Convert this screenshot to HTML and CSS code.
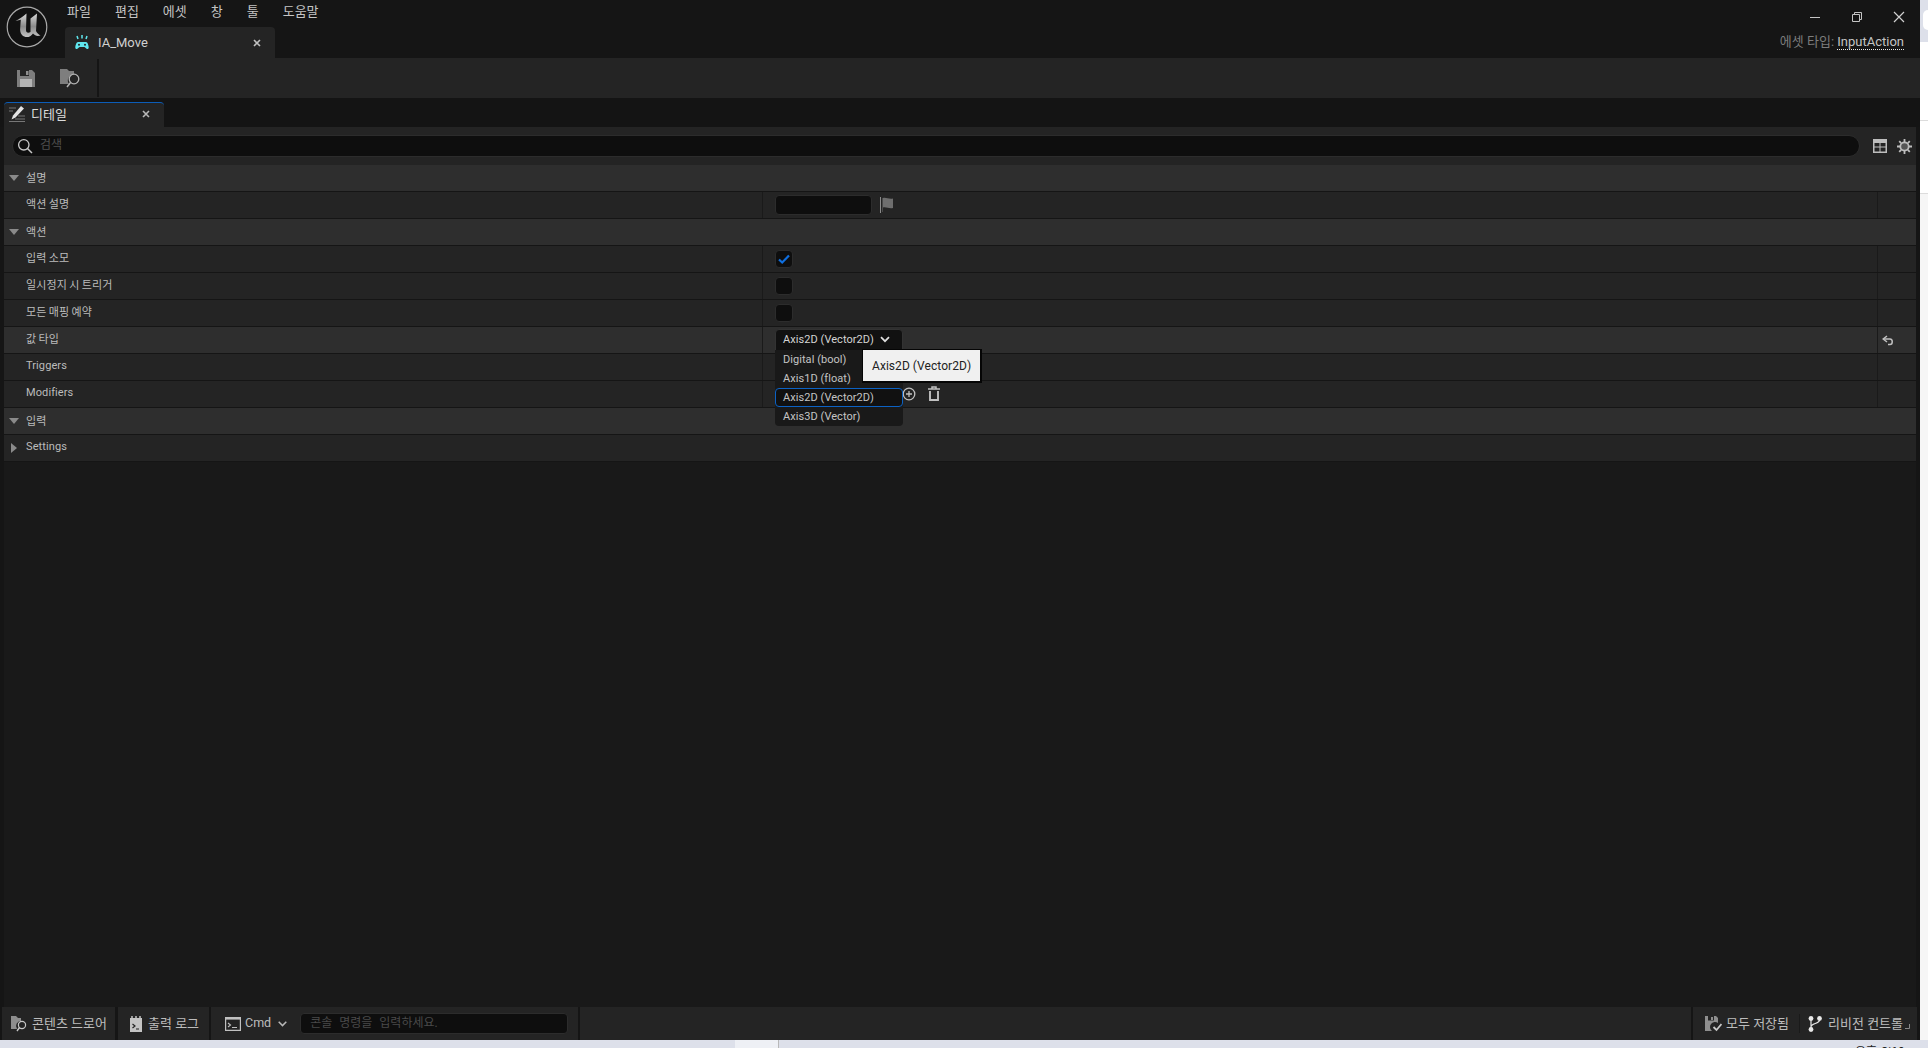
FILE: index.html
```html
<!DOCTYPE html>
<html lang="ko">
<head>
<meta charset="utf-8">
<title>IA_Move</title>
<link rel="stylesheet" href="styles.css">
</head>
<body>
<div class="screen">
  <div class="window">
    <header class="titlebar">
      <div class="logo">
        <svg width="44" height="44" viewBox="5 5 44 44">
          <defs><linearGradient id="ug" x1="0" y1="0" x2="0" y2="1"><stop offset="0" stop-color="#d8d8d8"/><stop offset=".55" stop-color="#8a8a8a"/><stop offset="1" stop-color="#c4c4c4"/></linearGradient></defs>
          <circle cx="27" cy="27" r="19.800" fill="#111" stroke="#a8a8a8" stroke-width="1.200"/>
          <path fill="url(#ug)" d="M15.500 21C19 19 23 17 26.500 13.500L26 30C26 32.500 28 33.500 30.500 32L30.500 18.500L37 13.500L36 31C37 33 39 34.500 40.500 35.500C37 36.500 35 35.500 33 33.500C30 38 25 38 22 35C20 32.500 20 30 20.200 28L20.800 19.800Z"/>
        </svg>
      </div>
      <div class="title-main">
        <nav class="menubar">
          <span class="menu-item">파일</span><span class="menu-item">편집</span><span class="menu-item">에셋</span><span class="menu-item">창</span><span class="menu-item">툴</span><span class="menu-item">도움말</span>
        </nav>
        <div class="doc-tab">
          <svg class="doc-tab-icon" width="14" height="15" viewBox="0 0 14 15">
            <path fill="#5fe6ee" d="M3 7h8c1.500 0 2.500 3 2.700 5.500.1 1.500-1.500 2-2.400 1L9.500 12h-5l-1.800 1.500c-.9 1-2.500.5-2.400-1C.5 10 1.500 7 3 7z"/>
            <path stroke="#5fe6ee" stroke-width="1.500" d="M2 1l1 3M7 0v3.500M12 1l-1 3"/>
            <circle cx="4" cy="9.800" r="1" fill="#222"/><circle cx="10" cy="9.800" r="1" fill="#222"/>
          </svg>
          <span class="doc-tab-name">IA_Move</span>
          <svg class="tab-close" width="8" height="8" viewBox="0 0 8 8"><path d="M1 1l6 6M7 1l-6 6" stroke="#c0c0c0" stroke-width="1.600"/></svg>
        </div>
      </div>
      <div class="title-right">
        <div class="win-controls">
          <svg width="12" height="12" viewBox="0 0 12 12"><path d="M1 6.500h10" stroke="#c4c4c4" stroke-width="1"/></svg>
          <svg width="12" height="12" viewBox="0 0 12 12"><path d="M1.500 3.500h7v7h-7zM3.500 3.500v-2h7v7h-2" fill="none" stroke="#c4c4c4" stroke-width="1"/></svg>
          <svg width="12" height="12" viewBox="0 0 12 12"><path d="M1 1l10 10M11 1L1 11" stroke="#d0d0d0" stroke-width="1.200"/></svg>
        </div>
        <div class="asset-type"><span class="asset-key">에셋 타입:</span> <span class="asset-val">InputAction</span></div>
      </div>
    </header>

    <div class="toolbar">
      <svg class="tool-save" width="18" height="18" viewBox="0 0 18 18"><path fill="#7e7e7e" d="M0 1h15l3 3v14H0z"/><path fill="#242424" d="M3 1h9v6H3z"/><path fill="#8e8e8e" d="M9 2h2.500v4H9z"/><path fill="#b4b4b4" d="M3 10h12v8H3z"/></svg>
      <svg class="tool-browse" width="21" height="21" viewBox="0 0 21 21"><path fill="#7e7e7e" d="M0 1h7l2 2h5v3.500a6 6 0 0 0-5 9.500H0z"/><circle cx="14" cy="11" r="4.800" fill="none" stroke="#b4b4b4" stroke-width="1.300"/><path d="M10.500 14.500L7 19" stroke="#b4b4b4" stroke-width="1.500"/></svg>
      <div class="tool-sep"></div>
    </div>

    <div class="panel-tabs">
      <div class="panel-tab">
        <svg width="16" height="16" viewBox="0 0 16 16"><path d="M0 2h7M0 5h4M6 13h10M9 10h7M0 15.500h16" stroke="#777" stroke-width="1"/><path fill="#e4e4e4" d="M12 0l3 2.500-8.500 9-4 2 1.500-4z"/></svg>
        <span class="panel-tab-name">디테일</span>
        <svg class="tab-close" width="8" height="8" viewBox="0 0 8 8"><path d="M1 1l6 6M7 1l-6 6" stroke="#b8b8b8" stroke-width="1.600"/></svg>
      </div>
    </div>

    <main class="panel">
      <div class="search-row">
        <div class="search-box">
          <svg width="16" height="16" viewBox="0 0 16 16"><circle cx="6.800" cy="6.800" r="5.200" fill="none" stroke="#c8c8c8" stroke-width="1.300"/><path d="M10.500 10.500L15 15" stroke="#c8c8c8" stroke-width="1.500"/></svg>
          <span class="search-ph">검색</span>
        </div>
        <svg class="search-table" width="14" height="14" viewBox="0 0 14 14"><path fill="#bdbdbd" fill-rule="evenodd" d="M0 0h14v14H0zM1.500 4v3.500h5V4zM7.500 4v3.500h5V4zM1.500 8.500v4h5v-4zM7.500 8.500v4h5v-4z"/></svg>
        <svg class="search-gear" width="15" height="15" viewBox="0 0 15 15"><circle cx="7.500" cy="7.500" r="4.200" fill="#555" stroke="#bdbdbd" stroke-width="1.800"/><path d="M7.500 0v3M7.500 12v3M0 7.500h3M12 7.500h3M2.200 2.200l2 2M10.800 10.800l2 2M12.800 2.200l-2 2M4.200 10.800l-2 2" stroke="#bdbdbd" stroke-width="1.800"/></svg>
      </div>

      <div class="row head"><span class="arrow-down"></span><span class="label-text">설명</span></div>
      <div class="row">
        <div class="cell-label"><span class="label-text">액션 설명</span></div>
        <div class="cell-value">
          <div class="textbox"></div>
          <svg class="flag" width="14" height="16" viewBox="0 0 14 16"><path d="M.5 0v16" stroke="#8a8a8a"/><path fill="#6e6e6e" d="M3 1c3-1 6 1.500 10 .5V11c-4 1-7-1.500-10-.5V15H2.500V1z"/></svg>
        </div>
        <div class="cell-reset"></div>
      </div>

      <div class="row head"><span class="arrow-down"></span><span class="label-text">액션</span></div>
      <div class="row">
        <div class="cell-label"><span class="label-text">입력 소모</span></div>
        <div class="cell-value"><div class="check"><svg width="14" height="14" viewBox="0 0 14 14"><path d="M2 7.500l3.200 3L12 3.500" fill="none" stroke="#0f6fe0" stroke-width="2.200"/></svg></div></div>
        <div class="cell-reset"></div>
      </div>
      <div class="row">
        <div class="cell-label"><span class="label-text">일시정지 시 트리거</span></div>
        <div class="cell-value"><div class="check"></div></div>
        <div class="cell-reset"></div>
      </div>
      <div class="row">
        <div class="cell-label"><span class="label-text">모든 매핑 예약</span></div>
        <div class="cell-value"><div class="check"></div></div>
        <div class="cell-reset"></div>
      </div>
      <div class="row hot">
        <div class="cell-label"><span class="label-text">값 타입</span></div>
        <div class="cell-value">
          <div class="combo">
            <span class="combo-text">Axis2D (Vector2D)</span>
            <svg width="10" height="7" viewBox="0 0 10 7"><path d="M1 1.200l4 4 4-4" fill="none" stroke="#e0e0e0" stroke-width="1.700"/></svg>
          </div>
          <div class="combo-menu">
            <div class="combo-item">Digital (bool)</div>
            <div class="combo-item">Axis1D (float)</div>
            <div class="combo-item selected">Axis2D (Vector2D)</div>
            <div class="combo-item">Axis3D (Vector)</div>
          </div>
          <div class="tooltip">Axis2D (Vector2D)</div>
        </div>
        <div class="cell-reset"><svg width="12" height="11" viewBox="0 0 12 11"><path d="M5 1L1.200 4 5 7" fill="none" stroke="#c0c0c0" stroke-width="1.500"/><path d="M1.500 4H8c3 0 3 5.500 0 5.500H6" fill="none" stroke="#c0c0c0" stroke-width="1.500"/></svg></div>
      </div>
      <div class="row">
        <div class="cell-label"><span class="label-text">Triggers</span></div>
        <div class="cell-value"></div>
        <div class="cell-reset"></div>
      </div>
      <div class="row">
        <div class="cell-label"><span class="label-text">Modifiers</span></div>
        <div class="cell-value array-tools">
          <svg width="14" height="14" viewBox="0 0 14 14"><circle cx="7" cy="7" r="5.800" fill="none" stroke="#c0c0c0" stroke-width="1.300"/><path d="M7 4v6M4 7h6" stroke="#c0c0c0" stroke-width="1.300"/></svg>
          <svg width="14" height="15" viewBox="0 0 14 15"><path d="M1 3h12M5 3V1h4v2" fill="none" stroke="#c0c0c0" stroke-width="1.500"/><path d="M3 5v9h8V5" fill="none" stroke="#c0c0c0" stroke-width="1.900"/></svg>
        </div>
        <div class="cell-reset"></div>
      </div>

      <div class="row head"><span class="arrow-down"></span><span class="label-text">입력</span></div>
      <div class="row plain">
        <span class="arrow-right"></span><span class="label-text">Settings</span>
      </div>
    </main>

    <footer class="statusbar">
      <div class="st-sec st-drawer">
        <svg width="17" height="16" viewBox="0 0 17 16"><path fill="#8e8e8e" d="M0 0h5l2 2h3v3a5 5 0 0 0-4 8H0z"/><circle cx="11" cy="9" r="3.600" fill="none" stroke="#c8c8c8" stroke-width="1.200"/><path d="M8.500 11.500L6 15" stroke="#c8c8c8" stroke-width="1.400"/></svg>
        <span class="st-text">콘텐츠 드로어</span>
      </div>
      <div class="st-sec st-log">
        <svg width="12" height="16" viewBox="0 0 12 16"><path fill="#c4c4c4" d="M0 2h12v14H0z"/><path d="M2 0v3M6 0v3M10 0v3" stroke="#c4c4c4" stroke-width="1.500"/><path d="M2.500 8l2.500 2-2.500 2M6 13h3" fill="none" stroke="#222" stroke-width="1.200"/></svg>
        <span class="st-text">출력 로그</span>
      </div>
      <div class="st-sec st-cmd">
        <svg width="16" height="14" viewBox="0 0 16 14"><path fill="none" stroke="#c0c0c0" stroke-width="1.200" d="M.6.6h14.800v12.800H.6z"/><path fill="#c0c0c0" d="M.6.6h14.800v2H.6z"/><path d="M3 6l2.500 2L3 10M7 10.500h5" fill="none" stroke="#c0c0c0" stroke-width="1.100"/></svg>
        <span class="cmd-name st-text">Cmd</span>
        <svg class="cmd-chev" width="9" height="6" viewBox="0 0 9 6"><path d="M.7.800l3.800 3.800L8.300.8" fill="none" stroke="#b8b8b8" stroke-width="1.500"/></svg>
        <div class="cmd-input">콘솔 명령을 입력하세요.</div>
      </div>
      <div class="st-fill"></div>
      <div class="st-sec st-right">
        <svg width="17" height="16" viewBox="0 0 17 16"><path fill="#8e8e8e" d="M0 0h11l2 2v5a5 5 0 0 0-6 8H0z"/><path fill="#242424" d="M3 0h6v4.500H3z"/><path fill="#8e8e8e" d="M6 1h2v3H6z"/><path d="M8.500 11l3 3L16.500 8" fill="none" stroke="#c8c8c8" stroke-width="1.800"/></svg>
        <span class="st-saved st-text">모두 저장됨</span>
        <div class="st-divider"></div>
        <svg width="14" height="16" viewBox="0 0 14 16"><circle cx="3" cy="2.500" r="2.400" fill="#e8e8e8"/><circle cx="3" cy="13.500" r="2.400" fill="#e8e8e8"/><circle cx="11.500" cy="2.500" r="2.400" fill="#e8e8e8"/><path d="M3 3v10M11.500 4c0 4-8.500 3-8.500 7" fill="none" stroke="#e8e8e8" stroke-width="1.200"/></svg>
        <span class="st-rev st-text">리비전 컨트롤</span>
        <svg class="st-grip" width="5" height="5" viewBox="0 0 5 5"><path d="M4.500 0v4.500H0" fill="none" stroke="#888"/></svg>
      </div>
    </footer>
  </div>
  <aside class="side-strip">
    <div class="strip-blue"><div class="strip-shape"></div></div>
    <div class="strip-white strip-a"></div>
    <div class="strip-white strip-b"></div>
    <div class="strip-white strip-c"></div>
  </aside>
</div>
<div class="taskbar">
  <div class="task-a"></div>
  <div class="task-b"></div>
  <div class="task-c"></div>
  <div class="task-clock">오후 3:10</div>
</div>
</body>
</html>
```
FILE: styles.css
```css
* { box-sizing: border-box; }
html, body { margin: 0; padding: 0; width: 1928px; height: 1048px; overflow: hidden; }
body { background: #dde0ea; font-family: Roboto, "Noto Sans CJK KR", sans-serif; font-size: 11px; color: #c0c0c0; }
svg { display: block; flex: none; }

.screen { display: flex; height: 1040px; }
.window { width: 1920px; height: 1040px; background: #151515; display: flex; flex-direction: column; }

/* title bar */
.titlebar { height: 58px; display: flex; flex: none; background: #151515; }
.logo { width: 65px; padding: 5px 0 0 5px; }
.title-main { flex: 1; display: flex; flex-direction: column; }
.menubar { height: 27px; display: flex; padding: 0 0 6px 2px; align-items: center; font-size: 13px; color: #c4c4c4; }
.menu-item { margin-right: 24px; }
.doc-tab { width: 210px; height: 31px; background: #242424; border-radius: 4px 4px 0 0; display: flex; align-items: center; padding: 0 14px 0 10px; }
.doc-tab-name { margin-left: 9px; font-size: 13px; color: #d0d0d0; flex: 1; }
.title-right { width: 240px; display: flex; flex-direction: column; align-items: flex-end; padding-right: 16px; }
.win-controls { display: flex; gap: 30px; height: 31px; align-items: center; padding-top: 3px; margin-right: -1px; }
.asset-type { font-size: 13px; line-height: 15px; margin-top: 3px; }
.asset-key { color: #7c7c7c; }
.asset-val { color: #c4c4c4; border-bottom: 1px dotted #e8e8e8; }

/* toolbar */
.toolbar { height: 40px; flex: none; background: #242424; display: flex; align-items: center; padding-left: 17px; }
.tool-browse { margin-left: 25px; }
.tool-sep { width: 2px; height: 38px; background: #151515; margin-left: 16px; }

/* panel tabs */
.panel-tabs { height: 29px; flex: none; background: #141414; padding: 4px 0 0 4px; }
.panel-tab { width: 160px; height: 25px; background: #242424; border-top: 1px solid #0c5db8; border-radius: 4px 4px 0 0; display: flex; align-items: center; padding: 0 14px 2px 5px; }
.panel-tab-name { margin: 0 0 2px 6px; font-size: 13px; color: #dcdcdc; flex: 1; }

/* details */
.panel { flex: 1; margin: 0 4px; background: #191919; min-height: 0; }
.search-row { height: 38px; background: #242424; display: flex; align-items: center; padding: 0 4px 0 8px; }
.search-box { width: 1848px; height: 22px; background: #0e0e0e; border: 1px solid #2c2c2c; border-radius: 11px; display: flex; align-items: center; padding-left: 4px; }
.search-ph { margin: 0 0 5px 7px; font-size: 12px; color: #4e4e4e; }
.search-table { margin-left: 13px; }
.search-gear { margin-left: 10px; }

.row { height: 27px; background: #242424; border-bottom: 1px solid #151515; display: flex; align-items: stretch; }
.row.head { background: #2e2e2e; align-items: center; }
.row.hot { background: #2e2e2e; }
.row.plain { align-items: center; }
.label-text { font-size: 11px; color: #bcbcbc; word-spacing: -0.5px; letter-spacing: .1px; margin-bottom: 2px; }
.cell-label .label-text, .row.plain .label-text { margin-bottom: 4px; }
.cell-label { width: 758px; padding-left: 22px; display: flex; align-items: center; }
.cell-value { flex: 1; position: relative; border-left: 1px solid #1a1a1a; padding-left: 12px; display: flex; align-items: center; }
.cell-reset { width: 39px; border-left: 1px solid #1a1a1a; display: flex; align-items: center; padding-left: 4px; }
.arrow-down { width: 0; height: 0; margin: 0 7px 0 5px; border-left: 5px solid transparent; border-right: 5px solid transparent; border-top: 6px solid #8a8a8a; }
.arrow-right { width: 0; height: 0; margin: 0 9px 0 7px; border-top: 5px solid transparent; border-bottom: 5px solid transparent; border-left: 6px solid #8a8a8a; }

.textbox { width: 97px; height: 20px; background: #0e0e0e; border: 1px solid #2c2c2c; border-radius: 4px; }
.flag { margin-left: 8px; }
.check { width: 18px; height: 18px; background: #0e0e0e; border: 1px solid #2c2c2c; border-radius: 4px; display: flex; align-items: center; justify-content: center; }

.combo { width: 128px; height: 22px; background: #111; border: 1px solid #333; border-radius: 4px 4px 0 0; display: flex; align-items: center; padding: 0 0 1px 7px; color: #d4d4d4; gap: 6px; }
.combo-text { letter-spacing: .05px; }
.combo-menu { position: absolute; left: 12px; top: 23px; width: 128px; background: #191919; border-radius: 0 0 4px 4px; z-index: 2; }
.combo-item { height: 19px; line-height: 17px; padding: 0 7px; border: 1px solid transparent; color: #c4c4c4; letter-spacing: .05px; }
.combo-item.selected { border-color: #0c62c4; border-radius: 4px; background: #111; }
.tooltip { position: absolute; left: 99px; top: 22px; height: 34px; width: 120px; background: #f0f0f0; border: 2px solid #050505; border-width: 1px 2px 2px 1px; color: #222; font-size: 12px; letter-spacing: .05px; display: flex; align-items: center; padding-left: 9px; z-index: 3; }

.array-tools { padding: 0 0 1px 139px; gap: 11px; }

/* status bar */
.statusbar { height: 33px; flex: none; display: flex; background: #151515; padding: 0 3px 0 2px; }
.st-sec { background: #242424; display: flex; align-items: center; font-size: 13px; color: #bcbcbc; }
.st-text { margin-bottom: 2px; }
.st-drawer { width: 113px; padding-left: 9px; gap: 4px; margin-right: 3px; }
.st-log { width: 91px; padding-left: 12px; gap: 6px; margin-right: 2px; }
.st-cmd { width: 367px; padding-left: 14px; margin-right: 2px; }
.cmd-name { margin-left: 4px; font-size: 12.500px; }
.cmd-chev { margin-left: 7px; }
.cmd-input { width: 268px; height: 21px; margin-left: 13px; background: #0e0e0e; border: 1px solid #2c2c2c; border-radius: 4px; padding-left: 9px; line-height: 18px; font-size: 12px; color: #4a4a4a; word-spacing: 4px; }
.st-fill { flex: 1; background: #242424; margin-right: 2px; }
.st-right { width: 224px; padding-left: 12px; }
.st-saved { margin-left: 4px; }
.st-divider { width: 1px; height: 19px; background: #1a1a1a; margin: 0 8px 0 10px; }
.st-rev { margin-left: 6px; }
.st-grip { margin: 5px 0 0 2px; }

/* background behind the window */
.side-strip { width: 8px; display: flex; flex-direction: column; background: #fff; }
.strip-blue { height: 42px; background: #dde0ea; padding: 10px 0 0 3px; }
.strip-shape { width: 5px; height: 20px; background: #fff; border-radius: 5px 0 0 5px; }
.strip-white { border-bottom: 1px solid #dcdcdc; background: #fff; }
.strip-a { height: 79px; }
.strip-b { height: 73px; }
.strip-c { flex: 1; border-bottom: 0; background: #f6f6f6; }

.taskbar { height: 8px; display: flex; overflow: hidden; background: #dde0ea; font-family: "Noto Sans CJK KR", sans-serif; }
.task-a { width: 735px; }
.task-b { width: 44px; background: #eef0f5; border-right: 1px solid #b8b8b8; }
.task-c { flex: 1; }
.task-clock { width: 72px; margin-right: 1px; height: 8px; font-size: 12px; line-height: 22px; color: #222; word-spacing: 1px; }
```
